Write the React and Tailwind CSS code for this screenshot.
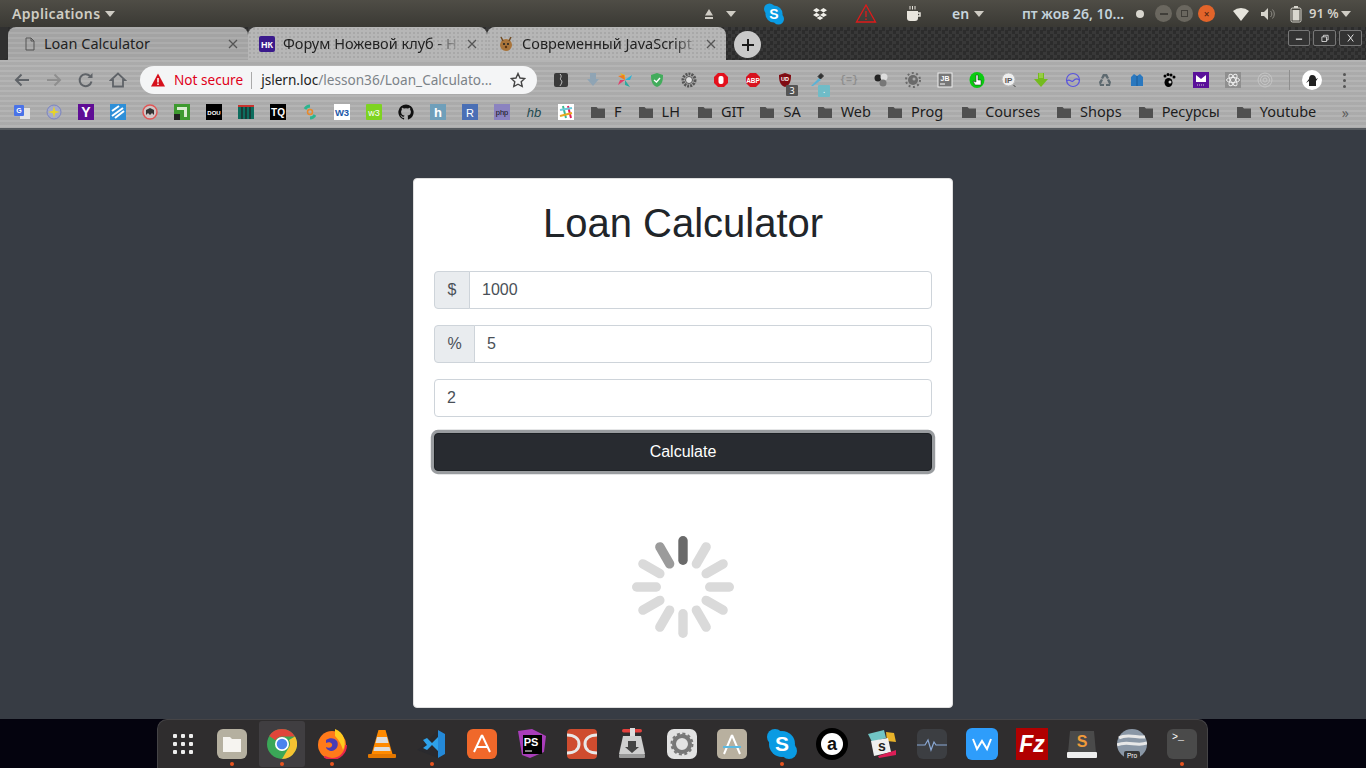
import React from "react";

const Ic = ({ children, s = 16, vb = "0 0 16 16", cls = "" }) => (
  <svg width={s} height={s} viewBox={vb} className={cls}>{children}</svg>
);

const Caret = ({ c = "#cfccc4" }) => (
  <svg width="10" height="6" viewBox="0 0 10 6"><path d="M0 0h10L5 6z" fill={c} /></svg>
);

const T = ({ x, y, s, c = "#fff", w = 700, f = "Liberation Sans", i = "normal", children, a = "middle" }) => (
  <text x={x} y={y} fontSize={s} fill={c} fontWeight={w} fontStyle={i} fontFamily={f} textAnchor={a}>{children}</text>
);

/* ---------- top panel ---------- */
function TopPanel() {
  return (
    <div className="h-[27px] shrink-0 flex items-center bg-gradient-to-b from-[#4f4d46] to-[#3a3934] text-[#d6d3ca] text-[14px] font-semibold [font-family:'Noto_Sans',sans-serif] relative">
      <span className="ml-[12px] text-[#cfcdc4] tracking-[0.35px]">Applications</span>
      <span className="ml-[5px]"><Caret /></span>
      <div className="ml-auto flex items-center h-full mr-[15px]">
        <Ic s={12} vb="0 0 12 12"><path d="M6 1l4 6.500H2zM2 9h8v2H2z" fill="#cfccc4" /></Ic>
        <span className="ml-[11px]"><Caret /></span>
        <span className="ml-[27px]">
          <Ic s={22} vb="0 0 22 22"><circle cx="11" cy="11" r="8.600" fill="#0a9be3" /><circle cx="6.500" cy="6" r="5.500" fill="#0a9be3" /><circle cx="15.500" cy="16" r="5.500" fill="#0a9be3" /><T x="11" y="16" s="14">S</T></Ic>
        </span>
        <span className="ml-[28px]">
          <Ic s={14} vb="0 0 14 14"><path d="M3.500 1L7 3.200 3.500 5.500 0 3.200zM10.500 1L14 3.200l-3.500 2.300L7 3.200zM3.500 5.700L7 8 3.500 10 0 8zM10.500 5.700L14 8l-3.500 2L7 8zM3.700 11L7 9l3.300 2L7 13z" fill="#f0efe9" /></Ic>
        </span>
        <span className="ml-[28px]">
          <Ic s={22} vb="0 0 22 22"><path d="M11 2l9.500 17h-19z" fill="none" stroke="#e01a1a" strokeWidth="1.300" /><path d="M11 8v6M11 15.500v1.500" stroke="#e01a1a" strokeWidth="1.300" /></Ic>
        </span>
        <span className="ml-[28px]">
          <Ic s={18} vb="0 0 18 18"><path d="M2 6h11v7a3 3 0 01-3 3H5a3 3 0 01-3-3z" fill="#e8e5dd" /><path d="M13 8h2v3h-2" fill="none" stroke="#e8e5dd" strokeWidth="1.500" /><path d="M5 1v3.500M7.500 1v3.500M10 1v3.500" stroke="#e8e5dd" strokeWidth="1" /></Ic>
        </span>
        <span className="ml-[29px] w-[18px] text-[#c9d6dd]">en</span>
        <span className="ml-[4px]"><Caret /></span>
        <span className="ml-[38px] w-[108px] text-[#c3d2da] whitespace-nowrap">пт жов 26, 10...</span>
        <span className="ml-[6px] w-[8px] h-[8px] rounded-full bg-[#d8d6ce]" />
        <span className="ml-[11px] w-[17px] h-[17px] rounded-full bg-[#6a675f] flex items-center justify-center"><span className="w-[8px] h-[2px] bg-[#403e39]" /></span>
        <span className="ml-[4px] w-[17px] h-[17px] rounded-full bg-[#6a675f] flex items-center justify-center"><span className="w-[7px] h-[7px] border border-[#403e39]" /></span>
        <span className="ml-[5px] w-[17px] h-[17px] rounded-full bg-[#e2642a] flex items-center justify-center text-[10px] leading-none text-[#5d2a14]">×</span>
        <span className="ml-[17px]">
          <Ic s={18} vb="0 0 18 18"><path d="M1 6a12 12 0 0116 0l-8 10z" fill="#e6e4dc" /></Ic>
        </span>
        <span className="ml-[10px]">
          <Ic s={16} vb="0 0 16 16"><path d="M1 6h3l4-4v12l-4-4H1z" fill="#d6d4cc" /><path d="M10.500 5a4 4 0 010 6M12.500 3.500a6.500 6.500 0 010 9" stroke="#8e8c85" fill="none" /></Ic>
        </span>
        <span className="ml-[11px]">
          <Ic s={18} vb="0 0 18 18"><rect x="4" y="3" width="10" height="14" rx="1.500" fill="none" stroke="#d8d6ce" /><rect x="7" y="1" width="4" height="2" fill="#d8d6ce" /><rect x="5.500" y="5" width="7" height="10.500" fill="#d8d6ce" /></Ic>
        </span>
        <span className="ml-[4px] w-[28px] text-[13px] text-[#d6d3ca] whitespace-nowrap">91 %</span>
        <span className="ml-[4px]"><Caret /></span>
      </div>
    </div>
  );
}

/* ---------- tab strip ---------- */
function Tab({ w, icon, title, active, fade, pad, gap }) {
  return (
    <div className={`h-[33px] flex items-center rounded-t-[8px] shrink-0 ${active ? "bg-[#a8a8a8] bg-[repeating-linear-gradient(180deg,rgba(255,255,255,0.05)_0px,rgba(255,255,255,0.05)_2px,rgba(0,0,0,0.03)_2px,rgba(0,0,0,0.03)_5px)]" : "bg-[#b6b6b6] bg-[radial-gradient(rgba(0,0,0,0.08)_1px,transparent_1px)] bg-size-[4px_4px]"} ${w} ${pad} pr-[10px]`}>
      <span className="w-[16px] h-[16px] shrink-0 flex items-center justify-center">{icon}</span>
      <span className={`${gap} flex-1 overflow-hidden whitespace-nowrap text-[14.5px] text-[#222] [font-family:'Noto_Sans',sans-serif] ${fade ? "[mask-image:linear-gradient(90deg,#000_85%,transparent)]" : ""}`}>{title}</span>
      <svg width="10" height="10" viewBox="0 0 10 10" className="ml-[6px] shrink-0"><path d="M1 1l8 8M9 1l-8 8" stroke="#555" strokeWidth="1.300" /></svg>
    </div>
  );
}

function TabStrip() {
  return (
    <div className="h-[33px] shrink-0 flex items-end bg-[#2f2f2f] bg-[repeating-conic-gradient(#383838_0_25%,#2c2c2c_0_50%)] bg-size-[7px_7px]">
      <div className="w-[8px] h-full rounded-br-[6px] bg-[#303030]" />
      <Tab w="w-[240px]" pad="pl-[14px]" gap="ml-[6px]" active title="Loan Calculator"
        icon={<Ic s={14} vb="0 0 14 14"><path d="M3 1h5l3 3v9H3z M8 1v3h3" fill="none" stroke="#555" /></Ic>} />
      <Tab w="w-[239px]" pad="pl-[11px]" gap="ml-[8px]" fade title="Форум Ножевой клуб - Н"
        icon={<Ic s={16} vb="0 0 16 16"><rect width="16" height="16" rx="2" fill="#3a1a8c" /><T x="8" y="11.500" s="9">НК</T></Ic>} />
      <Tab w="w-[239px]" pad="pl-[11px]" gap="ml-[8px]" fade title="Современный JavaScript"
        icon={<Ic s={16} vb="0 0 16 16"><circle cx="8" cy="9" r="6" fill="#a9743a" /><path d="M3 1l2 4M13 1l-2 4" stroke="#6f4a22" strokeWidth="1.500" /><circle cx="6" cy="8" r="1" fill="#222" /><circle cx="10" cy="8" r="1" fill="#222" /><circle cx="8" cy="11" r="1.200" fill="#5a3311" /></Ic>} />
      <div className="ml-[8px] mb-[2px] w-[27px] h-[27px] rounded-full bg-[#c9c9c9] flex items-center justify-center">
        <Ic s={14} vb="0 0 14 14"><path d="M7 1v12M1 7h12" stroke="#1a1a1a" strokeWidth="2" /></Ic>
      </div>
      <div className="ml-auto mr-[4px] mb-[14px] flex gap-[3px]">
        {[
          ["w-[22px]", <path key="a" d="M5 9h8" stroke="#eee" strokeWidth="1.500" />],
          ["w-[23px]", <path key="b" d="M5 6h6v6H5zM7 6V4h6v6h-2" fill="none" stroke="#eee" />],
          ["w-[23px]", <path key="c" d="M5 3l7 9M12 3l-7 9" stroke="#eee" strokeWidth="1.200" />],
        ].map(([wc, p], i) => (
          <div key={i} className={`${wc} h-[16px] rounded-[2px] border border-[#777] flex items-center justify-center bg-[#333]`}>
            <Ic s={14} vb="0 0 18 15">{p}</Ic>
          </div>
        ))}
      </div>
    </div>
  );
}

/* ---------- toolbar ---------- */
const Ext = ({ children }) => <span className="w-[32px] h-[20px] shrink-0 flex items-center justify-center relative">{children}</span>;

const extensions = [
  <Ic key="1"><rect x="1" y="1" width="14" height="14" rx="2" fill="#3a3a3a" /><path d="M7 2c3 3-1 4 1 6s0 4-1 6" stroke="#ccc" fill="none" /></Ic>,
  <Ic key="2"><path d="M5 1h6v6h3l-6 7-6-7h3z" fill="#8fa4b4" /></Ic>,
  <Ic key="3"><path d="M8 8L3 1l5 2z" fill="#e8b91f" /><path d="M8 8l7-5-2 5z" fill="#28b4d8" /><path d="M8 8l5 7-5-2z" fill="#2aa9a0" /><path d="M8 8l-7 5 2-5z" fill="#e43b6a" /><path d="M8 8L1 4l6-1z" fill="#f07a1f" /></Ic>,
  <Ic key="4"><path d="M8 1l6 2c0 6-1 10-6 12C3 13 2 9 2 3z" fill="#43ac5c" /><path d="M5 8l2.500 2L11 6" stroke="#fff" strokeWidth="1.400" fill="none" /></Ic>,
  <Ic key="5"><circle cx="8" cy="8" r="6" fill="none" stroke="#555" strokeWidth="3" strokeDasharray="2 1" /><circle cx="8" cy="8" r="3.500" fill="#ddd" stroke="#555" /></Ic>,
  <Ic key="6"><path d="M5 1h6l4 4v6l-4 4H5l-4-4V5z" fill="#e3101c" /><rect x="5.500" y="4" width="5" height="8" rx="2" fill="#fff" /></Ic>,
  <Ic key="7"><path d="M5 1h6l4 4v6l-4 4H5l-4-4V5z" fill="#d8121e" /><T x="8" y="10.500" s="6.500">ABP</T></Ic>,
  <><Ic key="8"><path d="M8 1l6 2c0 6-1 10-6 12C3 13 2 9 2 3z" fill="#800b12" /><T x="8" y="9" s="5.500">UD</T></Ic><span className="absolute right-[3px] bottom-[-6px] w-[12px] h-[11px] bg-[#555] rounded-[1px] text-[9px] leading-[11px] text-center text-white [font-family:'Noto_Sans',sans-serif]">3</span></>,
  <><Ic key="9"><path d="M2 14l8-8 2 2-8 6z" fill="#5ab3d6" /><path d="M10 3l3 3M12 1.500l2.500 2.500-3 3-2.500-2.500z" fill="#333" stroke="#333" /></Ic><span className="absolute right-[3px] bottom-[-7px] w-[12px] h-[12px] bg-[#6fbcc7] rounded-[1px] text-[8px] leading-[10px] text-center text-white">.</span></>,
  <span key="10" className="text-[10px] font-bold text-[#8f8f8f] [font-family:'Liberation_Mono',monospace]">{"{=}"}</span>,
  <Ic key="11"><circle cx="5" cy="6" r="3.500" fill="#222" /><circle cx="11" cy="5" r="3.500" fill="#ddd" /><circle cx="10" cy="11" r="3.500" fill="#777" /></Ic>,
  <Ic key="12"><circle cx="8" cy="8" r="5" fill="#6a6a6a" /><circle cx="8" cy="8" r="7" fill="none" stroke="#6a6a6a" strokeWidth="2" strokeDasharray="2 2.500" /><circle cx="9" cy="7" r="1.500" fill="#a8a8a8" /></Ic>,
  <Ic key="13"><rect x="1" y="1" width="14" height="14" fill="#777" stroke="#eee" /><T x="8" y="9" s="7">JB</T><path d="M3 12h5" stroke="#fff" /></Ic>,
  <Ic key="14"><ellipse cx="8" cy="8" rx="7.500" ry="8" fill="#0acb10" /><path d="M7 3h2v5h3v5H6L4 9l3 1z" fill="#fff" stroke="#222" strokeWidth=".5" /></Ic>,
  <Ic key="15"><circle cx="7.500" cy="7.500" r="6.500" fill="#eee" stroke="#bbb" /><T x="7.500" y="10.500" s="8" c="#555">IP</T><path d="M12.500 13l2 2" stroke="#444" /></Ic>,
  <Ic key="16"><path d="M5 1h6v6h4l-7 8-7-8h4z" fill="#74bb1e" /><path d="M7 1v5M9 1v5" stroke="#b9e06a" /></Ic>,
  <Ic key="17"><circle cx="8" cy="8" r="6.500" fill="none" stroke="#5a55dd" strokeWidth="1.200" /><path d="M2 9c3-3 4 2 6 0s4-3 6-1" fill="none" stroke="#5a55dd" strokeWidth="1.200" /></Ic>,
  <Ic key="18"><path d="M6 2h4l2 4-2 1-2-3-2 3-2-1zM2 10l2-3 2 1-2 4h3v2H3zM14 10l-2-3-2 1 2 4H9v2h4z" fill="#5e6a70" /></Ic>,
  <Ic key="19"><path d="M2 5l3-3 3 2 3-2 3 3v9H2z" fill="#2a78bf" /><path d="M8 4v10" stroke="#1b5b96" /></Ic>,
  <Ic key="20"><ellipse cx="7.500" cy="10.500" rx="4" ry="4.500" fill="#000" /><circle cx="4" cy="4" r="1.500" /><circle cx="7" cy="2.500" r="1.500" /><circle cx="10" cy="3" r="1.500" /><circle cx="13" cy="5" r="1.500" /><circle cx="9" cy="10" r="1.500" fill="#ccc" /></Ic>,
  <Ic key="21"><rect width="16" height="16" fill="#5a109a" /><rect x="3" y="3" width="10" height="7" fill="#fff" /><path d="M3 3l5 4 5-4" fill="#5a109a" /><path d="M4 13h8" stroke="#ccc" strokeDasharray="1 1" /></Ic>,
  <Ic key="22"><rect width="16" height="16" fill="#8f8f8f" /><ellipse cx="8" cy="8" rx="6.500" ry="2.500" fill="none" stroke="#eee" /><ellipse cx="8" cy="8" rx="6.500" ry="2.500" fill="none" stroke="#eee" transform="rotate(60 8 8)" /><ellipse cx="8" cy="8" rx="6.500" ry="2.500" fill="none" stroke="#eee" transform="rotate(120 8 8)" /></Ic>,
  <Ic key="23"><circle cx="8" cy="8" r="7" fill="none" stroke="#c6c6c6" /><circle cx="8" cy="8" r="4.500" fill="none" stroke="#c6c6c6" /><circle cx="8" cy="8" r="2" fill="none" stroke="#c6c6c6" /></Ic>,
];

function Toolbar() {
  return (
    <div className="h-[40px] flex items-center">
      <div className="w-[140px] shrink-0 flex items-center text-[#5c5c5c]">
        <Ic s={18} vb="0 0 18 18" cls="ml-[13px]"><path d="M16 9H3M8.500 3.500L3 9l5.500 5.500" fill="none" stroke="#5f6368" strokeWidth="2" /></Ic>
        <Ic s={18} vb="0 0 18 18" cls="ml-[14px]"><path d="M2 9h13M9.500 3.500L15 9l-5.500 5.500" fill="none" stroke="#8e8e8e" strokeWidth="2" /></Ic>
        <Ic s={18} vb="0 0 18 18" cls="ml-[14px]"><path d="M14.500 10.500a6 6 0 11-1.500-5.500" fill="none" stroke="#5f6368" strokeWidth="2" /><path d="M15.500 2v5h-5z" fill="#5f6368" /></Ic>
        <Ic s={18} vb="0 0 18 18" cls="ml-[14px]"><path d="M2 9l7-6.500L16 9h-2v6.500H4V9z" fill="none" stroke="#5f6368" strokeWidth="1.800" /></Ic>
      </div>
      <div className="w-[397px] h-[28px] shrink-0 rounded-full bg-[#f4f5f6] flex items-center pl-[10px] pr-[11px] text-[13.6px] whitespace-nowrap [font-family:'Noto_Sans',sans-serif]">
        <Ic s={16} vb="0 0 16 16"><path d="M8 1.500l7 13H1z" fill="#d6101c" /><path d="M8 6v4.500M8 11.500v1.500" stroke="#fff" strokeWidth="1.500" /></Ic>
        <span className="ml-[8px] text-[#e0001a]">Not secure</span>
        <span className="ml-[8px] w-px h-[17px] bg-[#aaa]" />
        <span className="ml-[9px] text-[#222]">jslern.loc<span className="text-[#7c8388]">/lesson36/Loan_Calculato...</span></span>
        <Ic s={16} vb="0 0 16 16" cls="ml-auto shrink-0"><path d="M8 1.500l2 4.500 4.800.5-3.600 3.200 1 4.800L8 12.200 3.800 14.500l1-4.800L1.200 6.500 6 6z" fill="none" stroke="#444" strokeWidth="1.400" /></Ic>
      </div>
      <div className="ml-[8px] flex items-center">
        {extensions.map((e, i) => <Ext key={i}>{e}</Ext>)}
      </div>
      <span className="ml-[8px] w-px h-[20px] bg-[#8e8e8e]" />
      <span className="ml-[12px] w-[20px] h-[20px] rounded-full bg-white flex items-center justify-center">
        <Ic s={14} vb="0 0 14 14"><path d="M7 2c3 0 4 2 4 4l2-1-2 3v5H4V8L1 10l3-4c0-2 1-4 3-4z" fill="#222" /></Ic>
      </span>
      <span className="ml-[21px] flex flex-col gap-[3px]">
        <span className="w-[3px] h-[3px] rounded-full bg-[#555]" /><span className="w-[3px] h-[3px] rounded-full bg-[#555]" /><span className="w-[3px] h-[3px] rounded-full bg-[#555]" />
      </span>
    </div>
  );
}

/* ---------- bookmarks ---------- */
const bookmarkIcons = [
  <Ic key="1"><rect x="6" y="4" width="10" height="11" fill="#e4e4e4" /><rect y="1" width="10" height="11" rx="1" fill="#4a73e8" /><T x="5" y="9" s="7">G</T></Ic>,
  <Ic key="2"><circle cx="8" cy="8" r="7" fill="#a6abc8" stroke="#7b84c0" /><path d="M8 2l1.200 4.800L14 8 9.200 9.200 8 14 6.800 9.200 2 8l4.800-1.200z" fill="#e6d42a" /></Ic>,
  <Ic key="3"><rect width="16" height="16" fill="#5f0d95" /><T x="8" y="13" s="14">Y</T></Ic>,
  <Ic key="4"><rect width="16" height="16" fill="#2d8fd8" /><path d="M2 12L13 4M5 14l9-7M2 7l7-5" stroke="#fff" strokeWidth="2" /></Ic>,
  <Ic key="5"><circle cx="8" cy="8" r="7" fill="#cfc6c6" stroke="#e25555" strokeWidth="1.400" /><path d="M4 11V6l4-2 4 2v5l-2-2-2 2-2-2z" fill="#333" /></Ic>,
  <Ic key="6"><rect width="16" height="16" fill="#3d9a2f" /><path d="M3 3h10v10h-3V6H3z" fill="#d8ecd0" /><rect y="10" width="6" height="6" fill="#222" /></Ic>,
  <Ic key="7"><rect width="16" height="16" fill="#000" /><T x="8" y="10.500" s="6">DOU</T></Ic>,
  <Ic key="8"><rect y="1" width="16" height="14" fill="#0d6d5e" /><path d="M4 1v14M8 1v14M12 1v14" stroke="#222" strokeWidth="1.300" /><path d="M0 2h16" stroke="#c8322d" strokeWidth="2" /></Ic>,
  <Ic key="9"><rect width="16" height="16" fill="#000" /><T x="8" y="12" s="10">TQ</T></Ic>,
  <Ic key="10"><path d="M8 2a6 6 0 00-5 3" fill="none" stroke="#2cb58e" strokeWidth="3" /><path d="M8 14a6 6 0 005-3" fill="none" stroke="#2cb58e" strokeWidth="3" /><circle cx="8" cy="8" r="2.500" fill="none" stroke="#e88a2c" strokeWidth="1.500" /></Ic>,
  <Ic key="11"><rect width="16" height="16" fill="#fff" /><T x="8" y="12" s="9.500" c="#2458a8">W3</T></Ic>,
  <Ic key="12"><rect width="16" height="16" rx="1" fill="#7ed321" /><T x="8" y="12" s="9" w={400}>w3</T></Ic>,
  <Ic key="13"><path d="M8 .5a7.700 7.700 0 00-2.400 15c.4.100.5-.2.500-.4v-1.300c-2.100.500-2.600-1-2.600-1-.4-.9-.9-1.100-.9-1.100-.7-.5.100-.5.100-.5.800.100 1.200.8 1.200.8.700 1.200 1.800.8 2.200.6.100-.5.300-.8.500-1-1.700-.2-3.500-.9-3.500-3.800 0-.8.300-1.500.8-2-.1-.2-.4-1 .1-2 0 0 .6-.2 2.100.8a7.300 7.300 0 013.800 0c1.500-1 2.100-.8 2.100-.8.400 1 .2 1.800.1 2 .5.500.8 1.200.8 2 0 3-1.800 3.600-3.500 3.800.3.200.5.700.5 1.400v2.100c0 .2.100.5.500.4A7.700 7.700 0 008 .5z" fill="#111" /></Ic>,
  <Ic key="14"><rect width="16" height="16" fill="#6f9fba" /><T x="8" y="13" s="13">h</T></Ic>,
  <Ic key="15"><rect width="16" height="16" fill="#4a6fb5" /><T x="8" y="12.500" s="11" w={400}>R</T></Ic>,
  <Ic key="16"><rect width="16" height="16" fill="#8b83c0" /><T x="8" y="11" s="7.500" c="#111" w={400}>php</T></Ic>,
  <Ic key="17"><T x="8" y="12.500" s="13" c="#1f4a50" w={400} i="italic">hb</T></Ic>,
  <Ic key="18"><rect width="16" height="16" fill="#fff" /><path d="M5 2l3 12" stroke="#3eb890" strokeWidth="2" /><path d="M10 2l3 12" stroke="#e01e5a" strokeWidth="2" /><path d="M2 6l12-2" stroke="#6ecadc" strokeWidth="2" /><path d="M2 12l12-3" stroke="#e9a820" strokeWidth="2" /></Ic>,
];

const folders = [
  ["F", "ml-[9px]"], ["LH", "ml-[17px]"], ["GIT", "ml-[18px]"], ["SA", "ml-[16px]"], ["Web", "ml-[17px]"],
  ["Prog", "ml-[17px]"], ["Courses", "ml-[19px]"], ["Shops", "ml-[17px]"], ["Ресурсы", "ml-[17px]"], ["Youtube", "ml-[17px]"],
];

function Bookmarks() {
  return (
    <div className="h-[24px] flex items-center text-[14.5px] text-[#1d1d1d] whitespace-nowrap [font-family:'Noto_Sans',sans-serif]">
      <div className="ml-[6px] flex items-center">
        {bookmarkIcons.map((ic, i) => <span key={i} className="w-[32px] flex justify-center">{ic}</span>)}
      </div>
      {folders.map(([name, ml]) => (
        <span key={name} className={`${ml} flex items-center gap-[9px]`}>
          <Ic s={14} vb="0 0 14 14"><path d="M0 2h5.500L7 3.500h7V13H0z" fill="#505050" /></Ic>
          {name}
        </span>
      ))}
      <span className="ml-auto mr-[17px] text-[#5e5e5e] text-[14px]">»</span>
    </div>
  );
}

/* ---------- page ---------- */
const inputCls = "flex-1 min-w-0 h-[38px] border border-[#ced4da] bg-white px-[12px] text-[16px] text-[#495057] outline-none";

function Spinner() {
  const colors = { 0: "#6a6a6a", 11: "#9b9b9b" };
  return (
    <svg width="110" height="110" viewBox="-55 -55 110 110">
      {Array.from({ length: 12 }).map((_, i) => (
        <rect key={i} x="-4.700" y="-51" width="9.400" height="29" rx="4.700"
          fill={colors[i] || "#dadada"} transform={`rotate(${i * 30})`} />
      ))}
    </svg>
  );
}

function Card() {
  return (
    <div className="w-[540px] h-[530px] mx-auto mt-12 bg-white border border-[#dfdfdf] rounded-[4px] p-5 [font-family:'Liberation_Sans',sans-serif]">
      <h1 className="text-[40px] leading-[48px] text-center text-[#212529] mb-6">Loan Calculator</h1>
      <div className="flex mb-4">
        <span className="w-[36px] h-[38px] flex items-center justify-center bg-[#e9ecef] border border-[#ced4da] rounded-l-[4px] text-[16px] text-[#495057]">$</span>
        <input readOnly value="1000" className={`${inputCls} -ml-px rounded-r-[4px]`} />
      </div>
      <div className="flex mb-4">
        <span className="w-[41px] h-[38px] flex items-center justify-center bg-[#e9ecef] border border-[#ced4da] rounded-l-[4px] text-[16px] text-[#495057]">%</span>
        <input readOnly value="5" className={`${inputCls} -ml-px rounded-r-[4px]`} />
      </div>
      <div className="flex mb-4">
        <input readOnly value="2" className={`${inputCls} rounded-[4px]`} />
      </div>
      <button className="block w-full h-[38px] rounded-[4px] bg-[#282b30] border border-[#1d2124] text-white text-[16px] shadow-[0_0_0_3.2px_rgba(52,58,64,0.5)]">Calculate</button>
      <div className="mt-4 h-[200px] flex items-center justify-center">
        <Spinner />
      </div>
    </div>
  );
}

/* ---------- dock ---------- */
const dockIcons = [
  { dot: false, el: <div className="grid grid-cols-3 gap-[4px]">{Array.from({ length: 9 }).map((_, i) => <span key={i} className="w-[4px] h-[4px] bg-[#eee] rounded-[1px]" />)}</div> },
  { dot: true, el: <div className="w-[30px] h-[30px] rounded-[6px] bg-[#b5b0a0] flex items-center justify-center"><Ic s={22} vb="0 0 22 22"><path d="M2 4h7l2 2h9v13H2z" fill="#f6f4f0" /></Ic></div> },
  { dot: true, el: <Ic s={30} vb="0 0 30 30"><circle cx="15" cy="15" r="15" fill="#3aa757" /><path d="M15 0a15 15 0 0113 7.500H15a7.500 7.500 0 00-6.500 3.700L2.200 7A15 15 0 0115 0z" fill="#e0453a" /><path d="M28 7.500A15 15 0 0115 30l6.500-11A7.500 7.500 0 0022 11z" fill="#f6c232" /><circle cx="15" cy="15" r="7" fill="#fff" /><circle cx="15" cy="15" r="5.300" fill="#4a84ee" /></Ic> },
  { dot: true, el: <Ic s={30} vb="0 0 30 30"><circle cx="15" cy="16" r="14" fill="#ff7a1a" /><circle cx="15" cy="16" r="14" fill="none" stroke="#e8274b" strokeWidth="2" strokeDasharray="30 60" /><path d="M18 0c9 3 12 14 8 21-2-6-4-10-8-14z" fill="#ffcb1f" /><path d="M9 11c4-3 9-2 11 1 2 4 0 9-5 10-3 0-6-2-6-4 3 2 7 0 6-3-1-2-4-2-6-1z" fill="#4a3bb5" /></Ic> },
  { dot: false, el: <Ic s={30} vb="0 0 30 30"><path d="M11.500 1h7l7 24h-21z" fill="#ff8a00" /><path d="M10 8h10l1.500 6h-13zM7.500 18h15l1 4h-17z" fill="#ddd" /><rect x="1" y="25" width="28" height="4" rx="1" fill="#e37700" /></Ic> },
  { dot: true, el: <Ic s={30} vb="0 0 30 30"><path d="M21 1l7 4v20l-7 4-21-8 3-2z" fill="#2a2a2e" /><path d="M21 1l7 4v20l-7 4z" fill="#2489d8" /><path d="M6 11l4-2 5 5 6-6v14l-6-6-5 5-4-2 4-3z" fill="#2ea2ea" /></Ic> },
  { dot: false, el: <div className="w-[30px] h-[30px] rounded-[6px] bg-[#f0682a] flex items-center justify-center"><Ic s={22} vb="0 0 22 22"><path d="M11 2L3 19M11 2l8 17M5 14h12" stroke="#fff" strokeWidth="2" fill="none" /></Ic></div> },
  { dot: false, el: <Ic s={32} vb="0 0 32 32"><path d="M2 3l14-2 14 7-2 16-14 6-8-3z" fill="#a93dba" /><rect x="7" y="7" width="19" height="19" fill="#000" /><T x="15" y="18" s="11">PS</T><path d="M9 23h7" stroke="#fff" /></Ic> },
  { dot: false, el: <div className="w-[30px] h-[30px] rounded-[4px] bg-[#cf4c2f] flex items-center justify-center overflow-hidden"><Ic s={30} vb="0 0 30 30"><path d="M0 6c8 0 12 4 12 9s-4 9-12 9M30 6c-8 0-12 4-12 9s4 9 12 9" fill="none" stroke="#e8e8e8" strokeWidth="3" /></Ic></div> },
  { dot: false, el: <Ic s={32} vb="0 0 32 32"><rect x="6" y="1" width="20" height="3.500" rx="1.700" fill="#e3403c" /><rect x="14" y="0" width="5" height="14" fill="#ddd" /><path d="M7 8h18l4 18H3z" fill="#cfcfcf" /><path d="M12 13h8v6h3l-7 6-7-6h3z" fill="#444" /><rect x="3" y="26" width="26" height="4" rx="1" fill="#999" /></Ic> },
  { dot: false, el: <div className="w-[30px] h-[30px] rounded-[7px] bg-[#e2e2e2] flex items-center justify-center"><Ic s={24} vb="0 0 24 24"><circle cx="12" cy="12" r="8" fill="none" stroke="#777" strokeWidth="4" /><circle cx="12" cy="12" r="10.500" fill="none" stroke="#777" strokeWidth="2" strokeDasharray="3 2.500" /></Ic></div> },
  { dot: false, el: <div className="w-[30px] h-[30px] rounded-[5px] bg-[#b8b09f] flex items-center justify-center"><Ic s={24} vb="0 0 24 24"><path d="M12 3L4 22M12 3l8 19" stroke="#fff" strokeWidth="2" fill="none" /><path d="M3 15h18" stroke="#5cb9e0" strokeWidth="2" /></Ic></div> },
  { dot: true, el: <Ic s={32} vb="0 0 32 32"><circle cx="16" cy="16" r="13" fill="#0a9be3" /><circle cx="9" cy="9" r="8" fill="#0a9be3" /><circle cx="23" cy="23" r="8" fill="#0a9be3" /><T x="16" y="23" s="21">S</T></Ic> },
  { dot: false, el: <Ic s={32} vb="0 0 32 32"><circle cx="16" cy="16" r="16" fill="#000" /><circle cx="16" cy="16" r="11" fill="#fff" /><T x="16" y="22" s="18" c="#111">a</T></Ic> },
  { dot: false, el: <Ic s={28} vb="0 0 28 28"><path d="M0 4l16-4 2 8-14 4z" fill="#71c5c5" /><path d="M18 2l8 1 2 9-9-1z" fill="#e9b32a" /><path d="M3 11l17-3 3 14-17 4z" fill="#efefef" /><path d="M10 26l18-6v5l-17 3z" fill="#dc1e57" /><T x="14" y="21" s="14" c="#222">s</T></Ic> },
  { dot: false, el: <div className="w-[30px] h-[30px] rounded-[6px] bg-[#3c3e42] flex items-center justify-center"><Ic s={30} vb="0 0 30 30"><path d="M0 16h8l3-5 3 10 3-8 2 3h11" fill="none" stroke="#8aa8d4" strokeWidth="1.200" /></Ic></div> },
  { dot: false, el: <div className="w-[32px] h-[32px] rounded-[6px] bg-[#2e9dfb] flex items-center justify-center"><Ic s={22} vb="0 0 22 22"><path d="M2 6l4 10 5-8 5 8 4-10" fill="none" stroke="#fff" strokeWidth="2" /></Ic></div> },
  { dot: false, el: <div className="w-[32px] h-[32px] bg-[#b10000] flex items-center justify-center"><span className="text-white font-bold italic text-[23px] leading-none [font-family:'Liberation_Sans',sans-serif]">Fz</span></div> },
  { dot: false, el: <Ic s={30} vb="0 0 30 30"><path d="M3 2h24l2 22H1z" fill="#4a4a4a" /><rect x="0" y="23" width="30" height="6" rx="1" fill="#eee" /><T x="15" y="18" s="16" c="#f09a3a">S</T></Ic> },
  { dot: false, el: <Ic s={30} vb="0 0 30 30"><circle cx="15" cy="15" r="15" fill="#8a97a6" /><path d="M2 9c8-5 18 0 26-1M0 16c10-5 20 2 30-2" stroke="#e8e8e8" strokeWidth="3" fill="none" /><rect x="7" y="22" width="16" height="8" rx="2" fill="#333" /><T x="15" y="28.500" s="6.500" w={400}>Pro</T></Ic> },
  { dot: true, el: <div className="w-[30px] h-[30px] rounded-[6px] bg-[#4a4a4a] pl-[5px] pt-[3px] text-[10px] leading-[12px] text-white [font-family:'Liberation_Mono',monospace]">&gt;_</div> },
];

function Dock() {
  return (
    <div className="h-[49px] shrink-0 bg-[#04030e] pl-[157px]">
      <div className="w-[1051px] h-full rounded-t-[10px] bg-[#2f2d2e] border-t border-x border-[#454446] flex items-center">
        {dockIcons.map((d, i) => (
          <div key={i} className={`${i === 0 ? "w-[49px]" : "w-[50px]"} h-[46px] shrink-0 relative flex items-center justify-center`}>
            {i === 2 && <span className="absolute inset-y-0 left-[2px] right-[2px] rounded-[3px] bg-[#403e41]" />}
            <span className="relative flex items-center justify-center">{d.el}</span>
            {d.dot && <span className="absolute bottom-[1px] left-1/2 -translate-x-1/2 w-[4px] h-[4px] rounded-full bg-[#e95420]" />}
          </div>
        ))}
      </div>
    </div>
  );
}

export default function App() {
  return (
    <div className="w-[1366px] h-[768px] overflow-hidden flex flex-col bg-[#373c44]">
      <TopPanel />
      <TabStrip />
      <div className="h-[70px] shrink-0 bg-[#b0b0b0] bg-[repeating-linear-gradient(180deg,rgba(255,255,255,0.05)_0px,rgba(255,255,255,0.05)_2px,rgba(0,0,0,0.03)_2px,rgba(0,0,0,0.03)_5px)] border-b-2 border-[#55595e]">
        <Toolbar />
        <Bookmarks />
      </div>
      <div className="flex-1 min-h-0"><Card /></div>
      <Dock />
    </div>
  );
}
